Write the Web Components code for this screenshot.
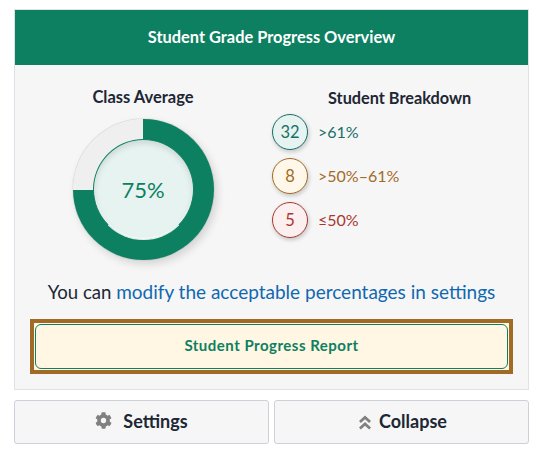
<!DOCTYPE html>
<html lang="en">
<head>
<meta charset="utf-8">
<title>Student Grade Progress Overview</title>
<style>
html, body { margin: 0; background: #fff; }
body { font-family: Lato, "Liberation Sans", sans-serif; color: #202633; }
</style>
</head>
<body>
<grade-overview></grade-overview>

<script>
const donutTemplate = document.createElement('template')
donutTemplate.innerHTML = `
<style>
:host {
  display: block;
  width: 141px;
  height: 141px;
}
.ring {
  width: 100%;
  height: 100%;
  border-radius: 50%;
  display: flex;
  align-items: center;
  justify-content: center;
  background: conic-gradient(#0c8060 0 75%, #efefef 75% 100%);
  box-shadow: 0 0 1px 0 rgba(0, 0, 0, .45), 3px 4px 9px rgba(0, 0, 0, .14);
}
.middle {
  box-sizing: border-box;
  width: 101px;
  height: 101px;
  border-radius: 50%;
  background: #e6f3f0;
  color: #0c8060;
  font-size: 22px;
  display: flex;
  align-items: center;
  justify-content: center;
  border: 1px solid #0c8060;
  border-bottom-color: #dfeee9;
  box-shadow: inset 0 3px 6px rgba(0, 0, 0, .12), inset 0 -1px 2px #fff;
}
</style>
<div class="ring"><div class="middle"><slot></slot></div></div>
`

class GradeDonut extends HTMLElement {
  constructor() {
    super()
    this.attachShadow({ mode: 'open' }).appendChild(donutTemplate.content.cloneNode(true))
  }
}
customElements.define('grade-donut', GradeDonut)

const breakdownTemplate = document.createElement('template')
breakdownTemplate.innerHTML = `
<style>
:host {
  display: flex;
  align-items: center;
  gap: 10px;
  height: 36px;
  font-size: 16px;
  color: var(--tone);
}
.count {
  box-sizing: border-box;
  width: 36px;
  height: 36px;
  padding-bottom: 1px;
  flex: none;
  border-radius: 50%;
  border: 1px solid var(--tone);
  background: var(--wash);
  font-size: 16.5px;
  display: flex;
  align-items: center;
  justify-content: center;
  box-shadow: 1px 2px 4px rgba(0, 0, 0, .2);
}
.label { padding-bottom: 1px; }
</style>
<span class="count"></span>
<span class="label"><slot></slot></span>
`

class BreakdownRow extends HTMLElement {
  static get observedAttributes() {
    return ['count']
  }

  constructor() {
    super()
    this.attachShadow({ mode: 'open' }).appendChild(breakdownTemplate.content.cloneNode(true))
  }

  attributeChangedCallback(name, old, val) {
    this.shadowRoot.querySelector('.count').textContent = val
  }
}
customElements.define('breakdown-row', BreakdownRow)

const toolTemplate = document.createElement('template')
toolTemplate.innerHTML = `
<style>
:host {
  display: block;
  flex: 1;
  min-width: 0;
}
button {
  box-sizing: border-box;
  width: 100%;
  height: 44px;
  display: flex;
  align-items: center;
  justify-content: center;
  padding: 0 0 3px;
  border: 1px solid #cdd0d8;
  border-radius: 3px;
  background: #f6f6f7;
  color: #202633;
  font: 700 18px Lato, "Liberation Sans", sans-serif;
}
</style>
<button><slot name="icon"></slot><slot></slot></button>
`

class ToolButton extends HTMLElement {
  constructor() {
    super()
    this.attachShadow({ mode: 'open' }).appendChild(toolTemplate.content.cloneNode(true))
  }
}
customElements.define('tool-button', ToolButton)

const overviewTemplate = document.createElement('template')
overviewTemplate.innerHTML = `
<style>
:host {
  display: block;
  width: 515px;
  padding: 9px 10px 7px 14px;
}
.card {
  box-sizing: border-box;
  height: 381px;
  border: 1px solid #dfe1e6;
  background: #f6f6f7;
}
header {
  box-sizing: border-box;
  height: 55px;
  padding-bottom: 2px;
  display: flex;
  align-items: center;
  justify-content: center;
  background: #0c8060;
  color: #fff;
  font-size: 16.4px;
  font-weight: 700;
}
.columns {
  display: flex;
  padding-top: 23px;
}
.average {
  width: 256px;
  display: flex;
  flex-direction: column;
  align-items: center;
}
.breakdown {
  margin-left: 1px;
  display: flex;
  flex-direction: column;
  gap: 8px;
}
h2 {
  margin: 0;
  font-size: 16.5px;
  line-height: 19px;
  font-weight: 700;
  color: #202633;
}
.average h2 { margin-bottom: 12px; }
.breakdown h2 { margin: 0 0 -1px 56px; font-size: 16.3px; }
.hint {
  margin: 19px 0 0;
  height: 25px;
  line-height: 25px;
  text-align: center;
  font-size: 18.6px;
  color: #202633;
}
a { color: #1068ae; text-decoration: none; font-size: 19px; }
.report-wrap {
  padding: 15px 15px 0;
}
.report {
  box-sizing: border-box;
  width: 483px;
  height: 55px;
  padding: 1px 0 0 1px;
  border: 4px solid #a26b25;
  background: #fff6e3;
}
.report button {
  display: block;
  width: 473px;
  height: 45px;
  padding: 0 0 3px;
  border: 1px solid #0c8060;
  border-radius: 6px;
  background: #fff6e3;
  color: #0c8060;
  font: 700 15px Lato, "Liberation Sans", sans-serif;
  letter-spacing: .5px;
}
.tools {
  display: flex;
  gap: 5px;
  margin-top: 10px;
}
svg { display: block; fill: #808080; }
.gear { width: 17px; height: 17px; margin-right: 11px; }
.chev { width: 12px; height: 15px; margin: 3px 8px 0 3px; }
</style>

<section class="card">
  <header>Student Grade Progress Overview</header>
  <div class="columns">
    <div class="average">
      <h2>Class Average</h2>
      <grade-donut>75%</grade-donut>
    </div>
    <div class="breakdown">
      <h2>Student Breakdown</h2>
      <breakdown-row count="32" style="--tone:#176f68;--wash:#e6f3f0">&gt;61%</breakdown-row>
      <breakdown-row count="8" style="--tone:#a26b25;--wash:#fff8ea">&gt;50%–61%</breakdown-row>
      <breakdown-row count="5" style="--tone:#a8382f;--wash:#fbf0ef">≤50%</breakdown-row>
    </div>
  </div>
  <p class="hint">You can <a href="#">modify the acceptable percentages in settings</a></p>
  <div class="report-wrap">
    <div class="report"><button>Student Progress Report</button></div>
  </div>
</section>

<div class="tools">
  <tool-button>
    <svg slot="icon" class="gear" viewBox="0 0 512 512"><path d="M487 316l-42-25c4-23 4-47 0-70l42-25c5-3 7-8 5-14-11-35-30-67-54-93-4-4-10-5-15-2l-42 25c-18-15-39-27-61-35V28c0-6-4-10-9-11-36-8-73-8-108 0-6 1-10 5-10 11v49c-22 8-42 20-60 35L91 87c-5-3-11-2-15 2-24 26-43 58-54 93-2 6 0 11 5 14l42 25c-4 23-4 47 0 70l-42 25c-5 3-7 8-5 14 11 35 30 67 54 93 4 4 10 5 15 2l42-25c18 15 39 27 61 35v49c0 6 4 10 10 11 35 8 72 8 108 0 5-1 9-5 9-11v-49c22-8 43-20 61-35l42 25c5 3 11 2 15-2 24-26 43-58 54-93 2-6 0-11-6-14zM256 336a80 80 0 1 1 0-160 80 80 0 0 1 0 160z"/></svg>
    Settings
  </tool-button>
  <tool-button>
    <svg slot="icon" class="chev" viewBox="0 0 13 15"><path d="M6.5 0L13 6l-2 2-4.5-4-4.5 4-2-2zM6.5 7L13 13l-2 2-4.5-4-4.5 4-2-2z"/></svg>
    Collapse
  </tool-button>
</div>
`

class GradeOverview extends HTMLElement {
  constructor() {
    super()
    this.attachShadow({ mode: 'open' }).appendChild(overviewTemplate.content.cloneNode(true))
  }
}
customElements.define('grade-overview', GradeOverview)
</script>
</body>
</html>
